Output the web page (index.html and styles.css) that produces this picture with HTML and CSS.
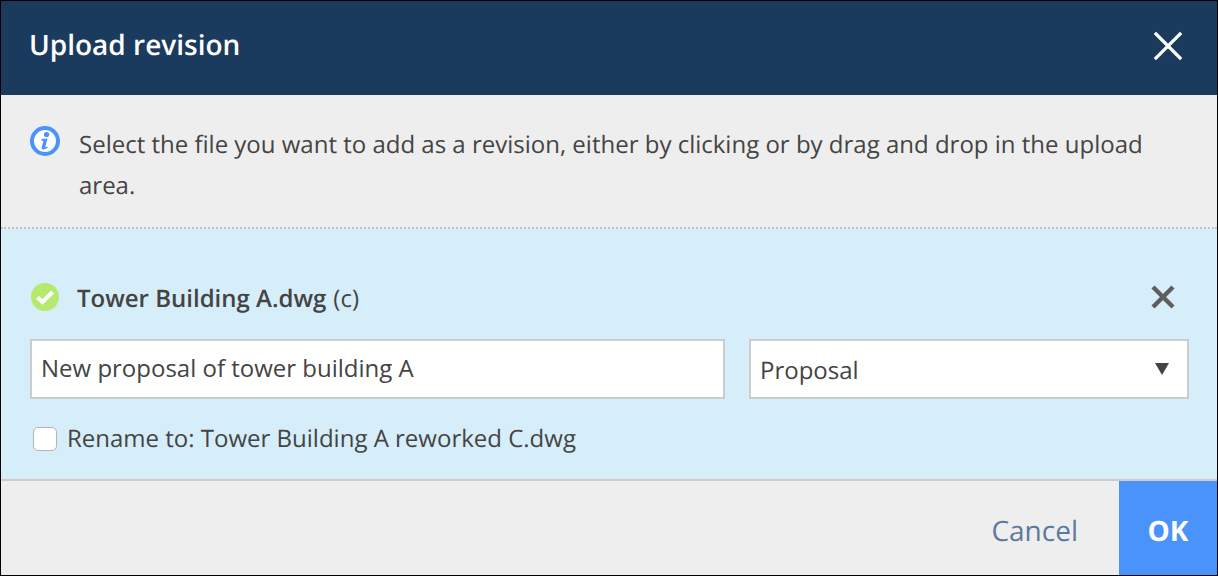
FILE: index.html
```html
<!DOCTYPE html>
<html lang="en">
<head>
    <meta charset="UTF-8">
    <meta name="viewport" content="width=device-width, initial-scale=1.0">
    <title>Upload revision</title>
    <link rel="stylesheet" href="styles.css">
</head>
<body>
    <div class="dialog">
        <header class="dialog-header">
            <h1 class="dialog-title">Upload revision</h1>
            <button class="header-close" type="button" aria-label="Close">
                <svg width="30" height="30" viewBox="0 0 30 30"><path d="M3 3 L27 27 M27 3 L3 27" stroke="#fff" stroke-width="3.2" stroke-linecap="square" fill="none"/></svg>
            </button>
        </header>

        <div class="info">
            <svg class="info-icon" width="30" height="30" viewBox="0 0 30 30">
                <circle cx="15" cy="15" r="13" fill="#fff" stroke="#4a93fb" stroke-width="4"/>
                <circle cx="16.6" cy="8.6" r="2.6" fill="#4a93fb"/>
                <path d="M11.5 13 L17.6 12.4 L15.4 20.6 Q15.2 21.8 17.6 20.4 L18 21.4 Q15.4 23.4 13.2 23.4 Q11.2 23.4 11.8 21 L13.4 15 L11.4 14.6 Z" fill="#4a93fb"/>
            </svg>
            <p class="info-text">Select the file you want to add as a revision, either by clicking or by drag and drop in the upload area.</p>
        </div>

        <section class="upload">
            <div class="file-row">
                <svg class="check-icon" width="28" height="28" viewBox="0 0 28 28">
                    <circle cx="14" cy="14" r="14" fill="#b5ea6f"/>
                    <path d="M6.5 14.5 L11.5 19 L21.5 9" stroke="#fff" stroke-width="4" fill="none"/>
                </svg>
                <span class="file-name">Tower Building A.dwg</span>
                <span class="file-rev">(c)</span>
                <button class="file-remove" type="button" aria-label="Remove">
                    <svg width="24" height="24" viewBox="0 0 24 24"><path d="M2 2 L22 22 M22 2 L2 22" stroke="#5e5e5e" stroke-width="4.4" fill="none"/></svg>
                </button>
            </div>
            <div class="field-row">
                <input class="text-field" type="text" value="New proposal of tower building A">
                <div class="select-field">
                    <span class="select-value">Proposal</span>
                    <span class="select-arrow"></span>
                </div>
            </div>
            <label class="rename">
                <span class="checkbox"></span>
                <span>Rename to: Tower Building A reworked C.dwg</span>
            </label>
        </section>

        <footer class="dialog-footer">
            <a class="btn-cancel" href="#">Cancel</a>
            <a class="btn-ok" href="#">OK</a>
        </footer>
    </div>
</body>
</html>
```

FILE: styles.css
```css
* {
    box-sizing: border-box;
}

html, body {
    height: 100%;
}

body {
    margin: 0;
    font-family: "Open Sans", sans-serif;
    font-size: 24px;
    color: #444;
    text-rendering: geometricPrecision;
}

.dialog {
    display: flex;
    flex-direction: column;
    height: 576px;
    border: 1px solid #000;
    background: #eee;
}

.dialog-header {
    display: flex;
    align-items: center;
    justify-content: space-between;
    height: 94px;
    padding: 0 34px 4px 28px;
    background: #1a3b5d;
}

.dialog-title {
    margin: 0 0 2px;
    font-size: 28px;
    font-weight: 600;
    color: #fff;
}

.header-close,
.file-remove {
    display: flex;
    padding: 0;
    border: none;
    background: none;
    cursor: pointer;
}

.info {
    display: flex;
    height: 134px;
    padding: 30px 40px 0 29px;
    border-bottom: 2px dotted #c4c4c4;
}

.info-icon {
    flex: none;
    margin-right: 19px;
    margin-top: 1px;
}

.info-text {
    margin: -1px 0 0;
    line-height: 41px;
}

.upload {
    display: flex;
    flex-direction: column;
    height: 252px;
    padding: 53px 28px 0 29px;
    background: #d6edfa;
    border-bottom: 2px solid #ccc;
}

.file-row {
    display: flex;
    align-items: center;
    height: 30px;
}

.check-icon {
    flex: none;
    margin: 0 18px 0 1px;
}

.file-name,
.file-rev {
    padding-top: 2px;
}

.file-name {
    font-weight: 600;
    margin-right: 7px;
}

.file-remove {
    margin-left: auto;
    margin-right: 14px;
}

.field-row {
    display: flex;
    gap: 24px;
    margin-top: 27px;
}

.text-field,
.select-field {
    height: 60px;
    border: 2px solid #ccc;
    background: #fff;
    font-family: inherit;
    font-size: 24px;
    color: #444;
}

.text-field {
    width: 695px;
    padding: 0 9px 4px;
    outline: none;
}

.select-field {
    display: flex;
    align-items: center;
    justify-content: space-between;
    width: 440px;
    padding: 0 18px 0 9px;
}

.select-value {
    padding-top: 2px;
}

.select-arrow {
    width: 0;
    height: 0;
    border-left: 7px solid transparent;
    border-right: 7px solid transparent;
    border-top: 12px solid #444;
}

.rename {
    display: flex;
    align-items: center;
    margin-top: 23px;
    line-height: 34px;
}

.checkbox {
    flex: none;
    width: 24px;
    height: 24px;
    margin: 0 10px 0 3px;
    border: 1px solid #b5b5b5;
    border-radius: 5px;
    background: #fff;
}

.dialog-footer {
    flex: 1;
    display: flex;
    justify-content: flex-end;
    align-items: stretch;
}

.dialog-footer a {
    display: flex;
    align-items: center;
    padding-top: 6px;
    text-decoration: none;
}

.btn-cancel {
    padding-right: 41px;
    font-size: 28px;
    color: #5b7a9d;
}

.btn-ok {
    justify-content: center;
    width: 98px;
    font-size: 28px;
    font-weight: 700;
    color: #fff;
    background: #4a93fb;
}
```
